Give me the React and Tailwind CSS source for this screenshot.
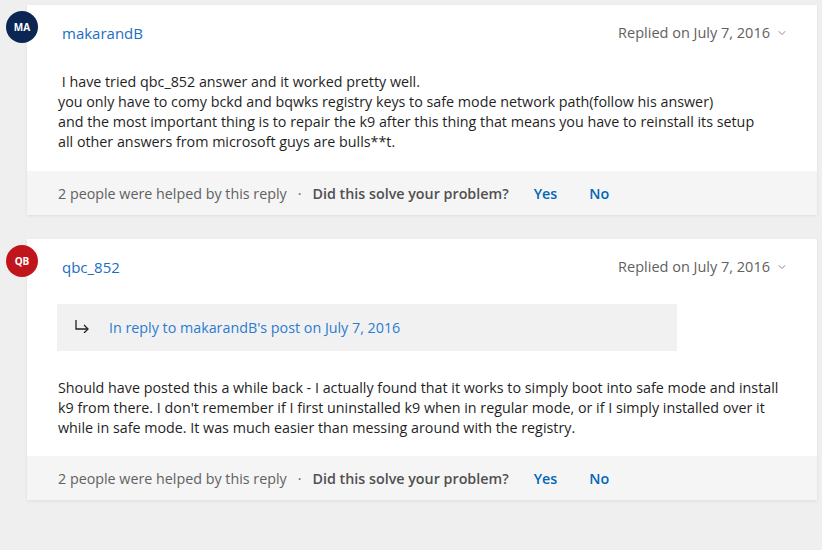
import { ChevronDown } from "lucide-react";

const font = { fontFamily: '"Segoe UI", "Open Sans", "Liberation Sans", sans-serif' };

function Avatar({ initials, color }) {
  return (
    <div
      className={`absolute -left-[21px] top-[6px] w-8 h-8 rounded-full flex items-center justify-center text-white text-[10px] font-bold ${color}`}
    >
      {initials}
    </div>
  );
}

function Footer() {
  return (
    <div className="h-[44px] bg-[#f5f5f5] flex items-center pl-[31px] pt-[2px] text-[14.3px]">
      <span className="text-[#616161]">2 people were helped by this reply</span>
      <span className="text-[#616161] mx-[11px]">·</span>
      <span className="text-[#505050] font-semibold">Did this solve your problem?</span>
      <span className="text-[#0067b8] font-semibold ml-[25px]">Yes</span>
      <span className="text-[#0067b8] font-semibold ml-[32px]">No</span>
    </div>
  );
}

function Header({ name }) {
  return (
    <div className="flex items-center justify-between pl-[35px] pr-[29px] pt-[18px] leading-[20px]">
      <span className="text-[#1b6ec2] text-[15px]">{name}</span>
      <span className="flex items-center text-[#616161] text-[14.5px]">
        Replied on July 7, 2016
        <ChevronDown className="ml-[6px] w-3 h-3" strokeWidth={1.5} />
      </span>
    </div>
  );
}

export default function App() {
  return (
    <div className="min-h-screen h-[550px] bg-[#efefef] pt-[5px] pl-[27px] pr-[5px]" style={font}>
      <div className="relative bg-white shadow-[0_1px_3px_rgba(0,0,0,0.08)]">
        <Avatar initials="MA" color="bg-[#0b2653]" />
        <Header name="makarandB" />
        <div className="pl-[31px] pr-6 pt-[29px] pb-[19px] text-[14.3px] leading-[20px] text-[#1f1f1f]">
          <p>&nbsp;I have tried qbc_852 answer and it worked pretty well.</p>
          <p>you only have to comy bckd and bqwks registry keys to safe mode network path(follow his answer)</p>
          <p>and the most important thing is to repair the k9 after this thing that means you have to reinstall its setup</p>
          <p>all other answers from microsoft guys are bulls**t.</p>
        </div>
        <Footer />
      </div>

      <div className="relative bg-white mt-[24px] shadow-[0_1px_3px_rgba(0,0,0,0.08)]">
        <Avatar initials="QB" color="bg-[#c1151c]" />
        <Header name="qbc_852" />
        <div className="ml-[30px] mt-[27px] w-[620px] h-[47px] bg-[#f1f1f1] flex items-center pl-[17px] text-[14.3px]">
          <svg width="16" height="14" viewBox="0 0 16 14" fill="none" stroke="#222" strokeWidth="1.3" className="-mt-[3px]">
            <path d="M2 1v9h12" />
            <path d="M10 6l4 4-4 4" />
          </svg>
          <span className="ml-[19px] text-[#2b7cd3]">In reply to makarandB's post on July 7, 2016</span>
        </div>
        <div className="pl-[31px] pr-6 pt-[27px] pb-[18px] text-[14.3px] leading-[20px] text-[#1f1f1f]">
          <p>
            Should have posted this a while back - I actually found that it works to simply boot into safe mode and install
            <br />
            k9 from there. I don't remember if I first uninstalled k9 when in regular mode, or if I simply installed over it
            <br />
            while in safe mode. It was much easier than messing around with the registry.
          </p>
        </div>
        <Footer />
      </div>
    </div>
  );
}
